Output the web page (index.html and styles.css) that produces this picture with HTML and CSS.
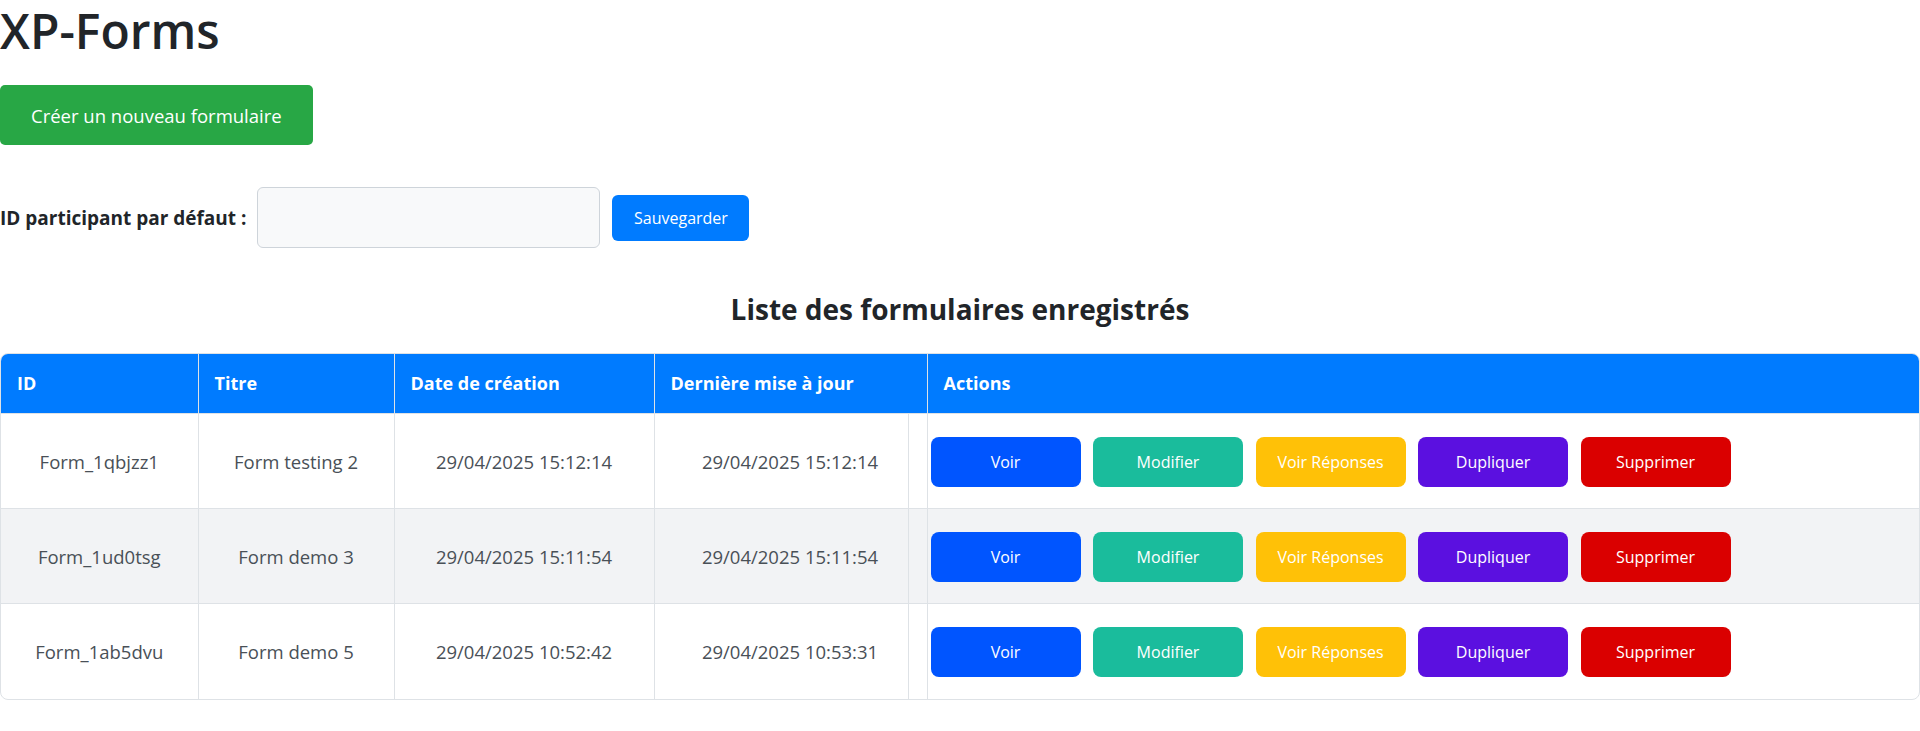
FILE: index.html
```html
<!DOCTYPE html>
<html lang="fr">
<head>
<meta charset="utf-8">
<title>XP-Forms</title>
<link rel="stylesheet" href="styles.css">
</head>
<body>
  <h1 class="title">XP-Forms</h1>
  <button class="btn-create">Créer un nouveau formulaire</button>

  <div class="participant-row">
    <label class="participant-label" for="pid">ID participant par défaut :</label>
    <input class="participant-input" id="pid" type="text">
    <button class="btn-save">Sauvegarder</button>
  </div>

  <h2 class="list-title">Liste des formulaires enregistrés</h2>

  <div class="table-wrap">
    <table class="forms-table">
      <colgroup>
        <col class="c-id">
        <col class="c-title">
        <col class="c-created">
        <col class="c-updated">
        <col class="c-spacer">
        <col class="c-actions">
      </colgroup>
      <thead>
        <tr>
          <th>ID</th>
          <th>Titre</th>
          <th>Date de création</th>
          <th colspan="2">Dernière mise à jour</th>
          <th>Actions</th>
        </tr>
      </thead>
      <tbody>
        <tr>
          <td>Form_1qbjzz1</td>
          <td>Form testing 2</td>
          <td>29/04/2025 15:12:14</td>
          <td class="updated">29/04/2025 15:12:14</td>
          <td class="spacer"></td>
          <td class="actions">
            <div class="action-list">
              <button class="act act-view">Voir</button>
              <button class="act act-edit">Modifier</button>
              <button class="act act-resp">Voir Réponses</button>
              <button class="act act-dup">Dupliquer</button>
              <button class="act act-del">Supprimer</button>
            </div>
          </td>
        </tr>
        <tr class="striped">
          <td>Form_1ud0tsg</td>
          <td>Form demo 3</td>
          <td>29/04/2025 15:11:54</td>
          <td class="updated">29/04/2025 15:11:54</td>
          <td class="spacer"></td>
          <td class="actions">
            <div class="action-list">
              <button class="act act-view">Voir</button>
              <button class="act act-edit">Modifier</button>
              <button class="act act-resp">Voir Réponses</button>
              <button class="act act-dup">Dupliquer</button>
              <button class="act act-del">Supprimer</button>
            </div>
          </td>
        </tr>
        <tr>
          <td>Form_1ab5dvu</td>
          <td>Form demo 5</td>
          <td>29/04/2025 10:52:42</td>
          <td class="updated">29/04/2025 10:53:31</td>
          <td class="spacer"></td>
          <td class="actions">
            <div class="action-list">
              <button class="act act-view">Voir</button>
              <button class="act act-edit">Modifier</button>
              <button class="act act-resp">Voir Réponses</button>
              <button class="act act-dup">Dupliquer</button>
              <button class="act act-del">Supprimer</button>
            </div>
          </td>
        </tr>
      </tbody>
    </table>
  </div>
</body>
</html>
```

FILE: styles.css
```css
* { box-sizing: border-box; }

body {
  margin: 0;
  font-family: "Open Sans", "Noto Sans", sans-serif;
  color: #212529;
  background: #ffffff;
}

.title {
  margin: 0;
  padding-top: 1px;
  font-size: 48px;
  font-weight: 600;
  line-height: 59px;
}

.btn-create {
  display: block;
  margin-top: 25px;
  height: 60px;
  padding: 0 31px;
  border: none;
  border-radius: 5px;
  background: #28a745;
  color: #ffffff;
  font-family: inherit;
  font-size: 18.5px;
}

.participant-row {
  display: flex;
  align-items: center;
  margin-top: 42px;
}

.participant-label {
  font-weight: 700;
  font-size: 19px;
}

.participant-input {
  width: 343px;
  height: 61px;
  margin-left: 11px;
  border: 1px solid #ced4da;
  border-radius: 6px;
  background: #f8f9fa;
  font-family: inherit;
  font-size: 17px;
  padding: 0 12px;
}

.btn-save {
  margin-left: 12px;
  width: 137px;
  height: 46px;
  border: none;
  border-radius: 6px;
  background: #007bff;
  color: #ffffff;
  font-family: inherit;
  font-size: 16px;
}

.list-title {
  margin: 45px 0 26px;
  text-align: center;
  font-size: 28px;
  font-weight: 700;
  line-height: 1.2;
}

.table-wrap {
  width: 1920px;
  border: 1px solid #dee2e6;
  border-radius: 8px;
  overflow: hidden;
}

.forms-table {
  width: 100%;
  border-collapse: collapse;
  table-layout: fixed;
}

.c-id { width: 197px; }
.c-title { width: 196px; }
.c-created { width: 260px; }
.c-updated { width: 254px; }
.c-spacer { width: 19px; }

.forms-table th {
  height: 60px;
  background: #007bff;
  color: #ffffff;
  font-size: 18px;
  font-weight: 700;
  text-align: left;
  padding: 0 16px;
  border-left: 1px solid #dee2e6;
  border-bottom: 1px solid #dee2e6;
}

.forms-table th:first-child { border-left: none; }

.forms-table td {
  height: 95px;
  padding: 0;
  text-align: center;
  color: #495057;
  font-size: 18.5px;
  border-left: 1px solid #dee2e6;
  border-bottom: 1px solid #dee2e6;
}

.forms-table td:first-child { border-left: none; }
.forms-table tr:last-child td { border-bottom: none; }

.forms-table td.updated { padding-left: 18px; }

.striped td { background: #f2f3f5; }

.forms-table td.actions {
  text-align: left;
  padding: 1px 0 0 3px;
}

.action-list {
  display: flex;
  gap: 12.5px;
}

.act {
  width: 150px;
  height: 50px;
  border: none;
  border-radius: 8px;
  color: #ffffff;
  font-family: inherit;
  font-size: 16px;
}

.act-view { background: #0055ff; }
.act-edit { background: #1abc9c; }
.act-resp { background: #ffc107; }
.act-dup { background: #5b10e0; }
.act-del { background: #da0000; }
```
